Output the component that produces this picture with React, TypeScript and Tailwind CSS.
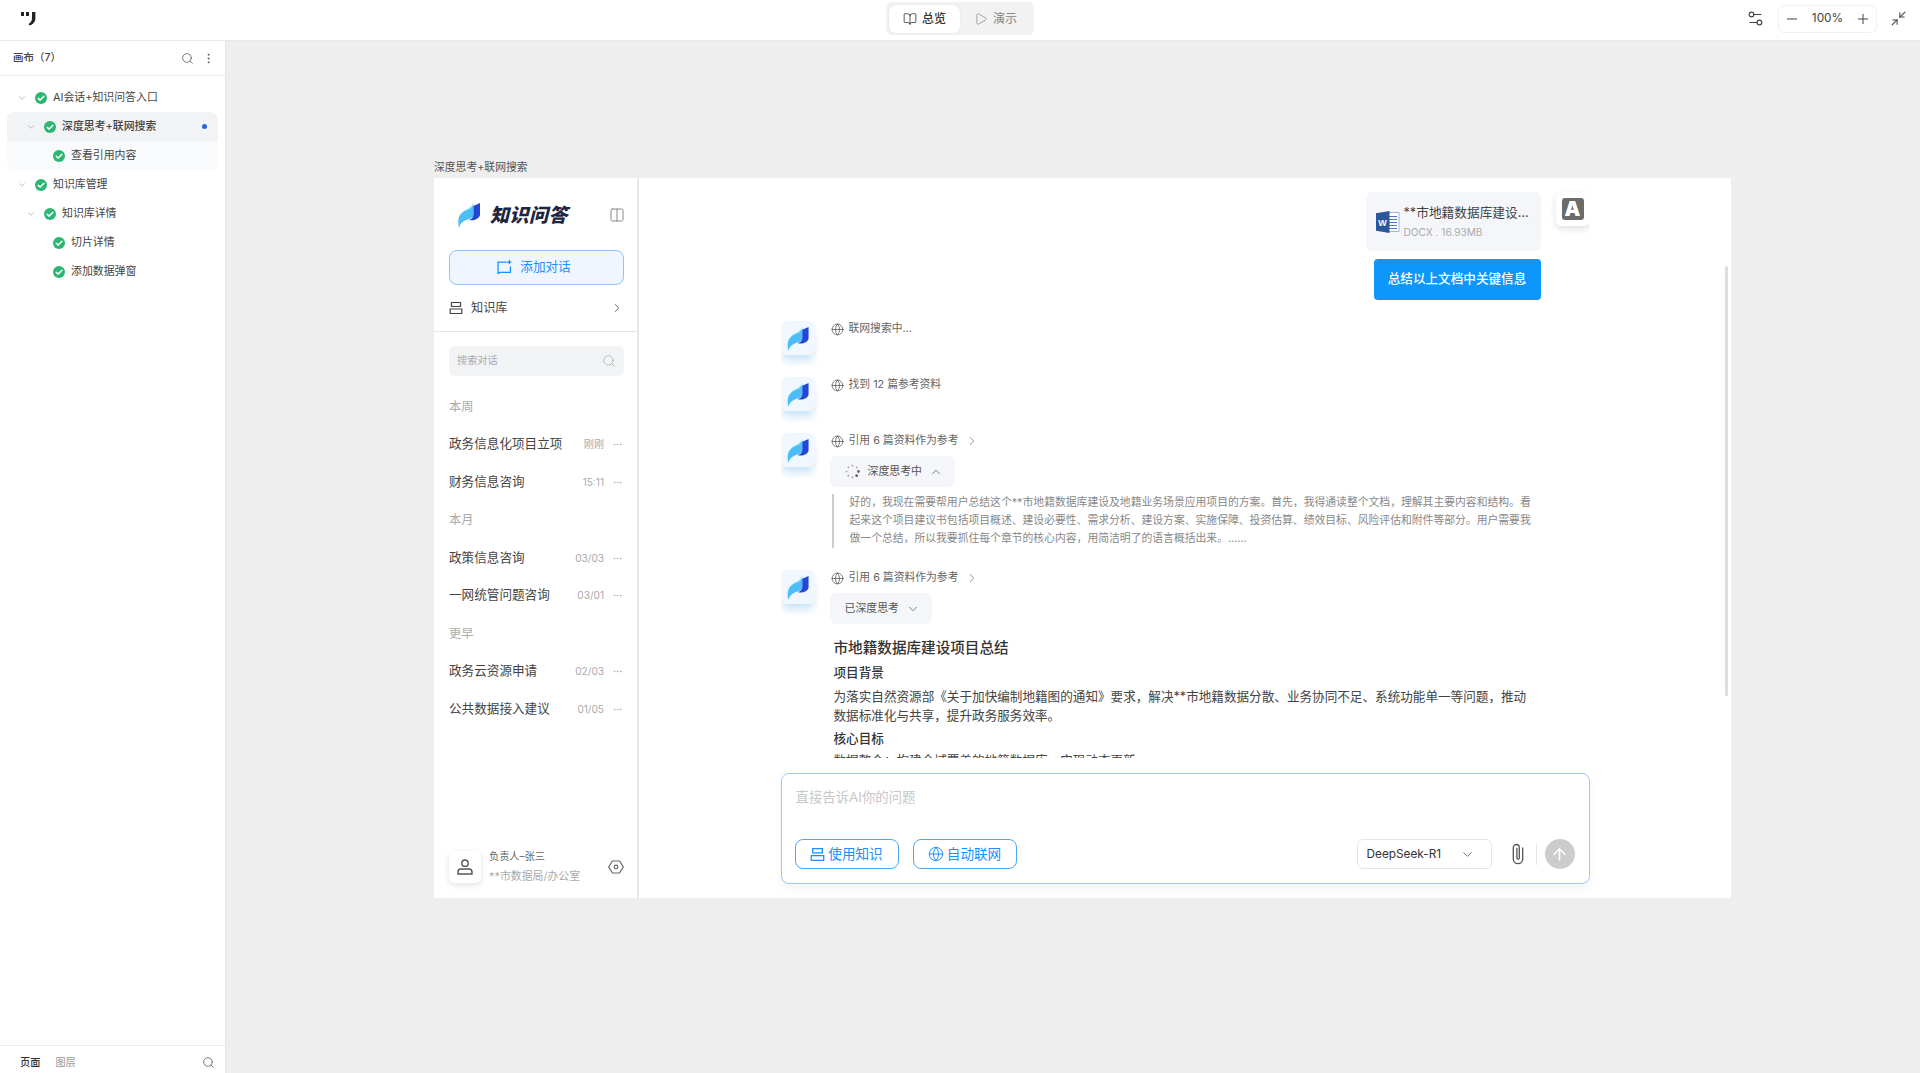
import { ArrowUp, BookOpen, ChevronDown, ChevronRight, ChevronUp, Columns2, Ellipsis, EllipsisVertical, Globe, Minimize2, Minus, Play, Plus, Search, Settings2 } from "lucide-react";

const tree = [
  { label: "AI会话+知识问答入口", level: 0 },
  { label: "深度思考+联网搜索", level: 1, active: true },
  { label: "查看引用内容", level: 2, soft: true },
  { label: "知识库管理", level: 0 },
  { label: "知识库详情", level: 1 },
  { label: "切片详情", level: 2 },
  { label: "添加数据弹窗", level: 2 },
];

const history = [
  { label: "本周" },
  { label: "政务信息化项目立项", time: "刚刚" },
  { label: "财务信息咨询", time: "15:11" },
  { label: "本月" },
  { label: "政策信息咨询", time: "03/03" },
  { label: "一网统管问题咨询", time: "03/01" },
  { label: "更早" },
  { label: "政务云资源申请", time: "02/03" },
  { label: "公共数据接入建议", time: "01/05" },
];

function CheckDot() {
  return (
    <svg viewBox="0 0 12 12" className="h-3 w-3 shrink-0">
      <circle cx="6" cy="6" r="6" fill="#2bb673" />
      <path d="M3.2 6.2 5.2 8.1 8.9 4.2" fill="none" stroke="#fff" strokeWidth="1.5" strokeLinecap="round" strokeLinejoin="round" />
    </svg>
  );
}

function Leaf({ className }: { className: string }) {
  return (
    <svg viewBox="0 0 22 26" className={className}>
      <path d="M5 9C9 7 14 5 16 0L16 8 6 13Z" fill="#a5e9ff" />
      <path d="M1 26C-1 18 1 12 6 9.5 10 7.5 13 7 15.5 3L15.5 12C15.5 17 10 17 7 18.5 4 20 2 22 1 26Z" fill="#4dbdf8" />
      <path d="M15.5 4 22 1 22 13C21 17 16 19 11 18 14 17 15.5 15 15.5 12Z" fill="#2347d4" />
    </svg>
  );
}

function KnowledgeIcon({ className }: { className: string }) {
  return (
    <svg viewBox="0 0 14 14" fill="none" stroke="currentColor" strokeWidth="1.2" className={className}>
      <path d="M2.5 1.5h9v4h-9z" />
      <path d="M12.8 8H1.2v4.5h11.6z" />
    </svg>
  );
}

function WebLine({ text, arrow }: { text: string; arrow?: boolean }) {
  return (
    <div className="ml-px flex h-[14px] translate-y-px items-center text-[10.8px] text-[#666]">
      <Globe className="mr-[5px] h-[13px] w-[13px] text-[#555]" strokeWidth={1.4} />
      <span>{text}</span>
      {arrow && <ChevronRight className="ml-[7px] h-[14px] w-[14px] text-[#777]" strokeWidth={1.3} />}
    </div>
  );
}

function BotAvatar() {
  return (
    <div className="flex h-[34px] w-[34px] shrink-0 items-center justify-center rounded-md bg-[#f1f7fe] shadow-[0_7px_8px_-2px_rgba(110,180,235,0.4)]">
      <Leaf className="h-[25px] w-[22px]" />
    </div>
  );
}

function Spinner() {
  const dots = [0, 45, 90, 135, 180, 225, 270, 315];
  return (
    <svg viewBox="0 0 16 16" className="h-[15px] w-[15px]">
      {dots.map((a, i) => (
        <circle
          key={a}
          cx={8 + 6.3 * Math.cos((a * Math.PI) / 180)}
          cy={8 + 6.3 * Math.sin((a * Math.PI) / 180)}
          r={i < 2 ? 1.5 : 0.9}
          fill={i < 2 ? "#666" : "#999"}
        />
      ))}
    </svg>
  );
}

function WordIcon() {
  return (
    <svg viewBox="0 0 24 24" className="h-6 w-6 shrink-0">
      <path d="M9 2.5h14v19H9z" fill="#fff" stroke="#8ea6cc" strokeWidth="0.8" />
      <path d="M13 6.5h8M13 9.5h8M13 12.5h8M13 15.5h8M13 18.5h8" stroke="#4f78b8" strokeWidth="1.1" />
      <path d="M0 3.2 13.5 1v22L0 20.8z" fill="#2b579a" />
      <text x="6.6" y="15.6" textAnchor="middle" fontSize="9" fontWeight="700" fill="#fff" fontFamily="Liberation Sans, sans-serif">W</text>
    </svg>
  );
}

export default function App() {
  return (
    <div className="flex h-screen flex-col overflow-hidden bg-white font-['Inter','Noto_Sans_CJK_SC',sans-serif] text-[#333]">
      {/* top bar */}
      <header className="flex h-[41px] shrink-0 items-center border-b border-[#e9e9e9] bg-white pb-[3px]">
        <div className="flex flex-1 items-center">
          <svg viewBox="0 0 16 15" className="ml-[20px] h-[15px] w-4 text-[#222]">
            <path d="M1 1h3v4H1zM6 1h3v4H6z" fill="currentColor" />
            <path d="M12 1h3.4v6C15.4 11 13 13.4 9.5 14.6L8.6 13C11 11.6 12 9.5 12 7z" fill="currentColor" />
          </svg>
        </div>
        <div className="flex h-[33px] w-[148px] items-center rounded-md bg-[#f2f2f2] p-[3px]">
          <div className="flex h-[28px] w-[71px] items-center justify-center gap-[5px] rounded-md bg-white text-[12px] font-medium text-[#333] shadow-[0_0_1px_rgba(0,0,0,0.2)]">
            <BookOpen className="h-[14px] w-[14px]" strokeWidth={1.4} />
            总览
          </div>
          <div className="flex h-[28px] flex-1 items-center justify-center gap-[5px] text-[12px] text-[#888]">
            <Play className="h-[14px] w-[14px]" strokeWidth={1.3} />
            演示
          </div>
        </div>
        <div className="flex flex-1 items-center justify-end">
          <Settings2 className="mr-[13px] h-[19px] w-[19px] text-[#444]" strokeWidth={1.4} />
          <div className="flex h-7 w-[99px] items-center justify-between rounded-md border border-[#f0f0f0] px-[5px] text-[11.8px] text-[#444]">
            <Minus className="h-4 w-4" strokeWidth={1.5} />
            <span>100%</span>
            <Plus className="h-4 w-4" strokeWidth={1.5} />
          </div>
          <Minimize2 className="ml-[13px] mr-[13px] h-[17px] w-[17px] text-[#444]" strokeWidth={1.5} />
        </div>
      </header>

      <div className="flex min-h-0 flex-1">
        {/* page tree */}
        <aside className="flex w-[226px] shrink-0 flex-col border-r border-[#e6e6e6] bg-white">
          <div className="flex h-[35px] shrink-0 items-center justify-between border-b border-[#ececec] pl-[13px] pr-[10px] text-[10.5px] text-[#444]">
            <span className="font-medium">画布（7）</span>
            <div className="flex items-center gap-[8px]">
              <Search className="h-[13px] w-[13px] text-[#555]" strokeWidth={1.4} />
              <EllipsisVertical className="h-[13px] w-[13px] text-[#555]" strokeWidth={1.6} />
            </div>
          </div>
          <div className="flex-1 pt-[7px]">
            {tree.map((t) => (
              <div
                key={t.label}
                className={[
                  "mx-[7px] flex h-[29px] items-center text-[10.9px] text-[#444]",
                  t.level === 0 ? "pl-[10px]" : "",
                  t.level === 1 ? "pl-[19px]" : "",
                  t.level === 2 ? "pl-[46px]" : "",
                  t.active ? "rounded-t-lg bg-[#f2f3f5] font-medium" : "",
                  t.soft ? "rounded-b-lg bg-[#f9fafb]" : "",
                ].join(" ")}
              >
                {t.level < 2 && <ChevronDown className="mr-[8px] h-[10px] w-[10px] text-[#999]" strokeWidth={1.5} />}
                <CheckDot />
                <span className="ml-[6px]">{t.label}</span>
                {t.active && <span className="ml-auto mr-[11px] h-[5px] w-[5px] rounded-full bg-[#2563eb]" />}
              </div>
            ))}
          </div>
          <div className="flex h-[28px] shrink-0 items-center border-t border-[#ececec] pl-[20px] pr-[10px] pt-[6px] text-[10.2px]">
            <span className="font-medium text-[#333]">页面</span>
            <span className="ml-[15px] text-[#999]">图层</span>
            <Search className="ml-auto h-[13px] w-[13px] text-[#555]" strokeWidth={1.4} />
          </div>
        </aside>

        {/* canvas */}
        <main className="flex-1 bg-[#eeeeee] pl-[208px] pt-[119px]">
          <div className="flex h-[18px] -translate-y-px items-center text-[10.8px] text-[#555]">深度思考+联网搜索</div>
          <div className="flex h-[720px] w-[1297px] bg-white">
            {/* chat list */}
            <section className="flex w-[205px] shrink-0 flex-col border-r-2 border-[#e8e8e8]">
              <div className="mt-[19px] flex h-[36px] items-center pl-[24px] pr-[12px]">
                <Leaf className="h-[26px] w-[22px]" />
                <span className="ml-[10px] text-[19px] font-black italic leading-none tracking-[0.5px] text-[#1d2540]">知识问答</span>
                <Columns2 className="ml-auto h-4 w-4 text-[#888]" strokeWidth={1.5} />
              </div>
              <div className="ml-[15px] mr-[13px] mt-[17px] flex h-[35px] items-center justify-center gap-[8px] rounded-lg border border-[#8fc3fb] bg-[#eff6ff] pr-[5px] text-[12.6px] text-[#1890ff]">
                <svg viewBox="0 0 14 14" fill="none" stroke="currentColor" strokeWidth="1.2" className="h-[15px] w-[15px]">
                  <path d="M9 2H1v10.5l2-1h9.5V6" />
                  <path d="M11.5 0v4M9.5 2h4" />
                </svg>
                添加对话
              </div>
              <div className="flex h-[47px] items-center border-b border-[#e5e5e5] pl-[15px] pr-[13px] text-[12.2px] text-[#444]">
                <KnowledgeIcon className="mr-[8px] h-[14px] w-[14px] text-[#444]" />
                知识库
                <ChevronRight className="ml-auto h-[14px] w-[14px] text-[#555]" strokeWidth={1.5} />
              </div>
              <div className="ml-[15px] mr-[13px] mt-[14px] flex h-[30px] items-center justify-between rounded-md bg-[#f2f3f5] px-[8px] text-[10.2px] text-[#aaa]">
                搜索对话
                <Search className="h-[14px] w-[14px] text-[#aaa]" strokeWidth={1.3} />
              </div>
              <div className="mt-[12px]">
                {history.map((h) =>
                  h.time ? (
                    <div key={h.label} className="flex h-[37.8px] items-center pl-[15px] pr-[14px] text-[12.6px] text-[#444]">
                      <span>{h.label}</span>
                      <span className="ml-auto text-[10.1px] text-[#aaa]">{h.time}</span>
                      <Ellipsis className="ml-[8px] h-[11px] w-[11px] text-[#aaa]" strokeWidth={1.5} />
                    </div>
                  ) : (
                    <div key={h.label} className="flex h-[37.8px] items-center px-[15px] text-[12.2px] text-[#aaa]">
                      {h.label}
                    </div>
                  ),
                )}
              </div>
              <div className="mt-auto flex items-center pb-[15px] pl-[15px] pr-[13px]">
                <div className="flex h-8 w-8 items-center justify-center rounded-md bg-white shadow-[0_2px_6px_rgba(0,0,0,0.12)]">
                  <svg viewBox="0 0 18 18" fill="none" stroke="#555" strokeWidth="1.4" className="h-[18px] w-[18px]">
                    <circle cx="9" cy="5.2" r="3.2" />
                    <path d="M2 16v-2c0-2 1.5-3 3-3h8c1.5 0 3 1 3 3v2z" />
                  </svg>
                </div>
                <div className="ml-[8px] flex flex-col gap-[5px] text-[10.2px] leading-[14px]">
                  <span className="-translate-y-px text-[#666]">负责人–张三</span>
                  <span className="text-[10.9px] text-[#aaa]">**市数据局/办公室</span>
                </div>
                <svg viewBox="0 0 16 16" fill="none" stroke="#666" strokeWidth="1.2" className="ml-auto h-4 w-4">
                  <path d="M4.5 2h7L15.3 8l-3.8 6h-7L.7 8z" />
                  <circle cx="8" cy="8" r="1.8" />
                </svg>
              </div>
            </section>

            {/* conversation */}
            <section className="relative flex-1">
              <div className="mx-auto h-[580px] w-[809px] overflow-hidden pt-[14px]">
                <div className="flex items-start justify-end gap-[15px]">
                  <div className="flex h-[59px] w-[175px] items-center gap-[4px] rounded-md bg-[#f5f6fa] pl-[10px]">
                    <WordIcon />
                    <div className="min-w-0">
                      <div className="text-[12.7px] leading-[18px] text-[#444]">**市地籍数据库建设…</div>
                      <div className="mt-[3px] text-[10.1px] leading-[14px] text-[#aaa]">DOCX . 16.93MB</div>
                    </div>
                  </div>
                  <div className="flex h-[34px] w-[34px] items-center justify-center rounded-md bg-white shadow-[0_3px_7px_rgba(0,0,0,0.12)]">
                    <div className="flex h-[22px] w-[22px] items-center justify-center rounded-[3px] bg-[#6b6b6b] text-[20px] font-black leading-none text-white">A</div>
                  </div>
                </div>
                <div className="mr-[49px] mt-[8px] flex justify-end">
                  <div className="flex h-[41px] w-[167px] items-center justify-center rounded-[4px] bg-[#0d96fb] text-[12.6px] font-medium text-white">总结以上文档中关键信息</div>
                </div>

                <div className="mt-[21px] flex h-[56px] gap-[15px]">
                  <BotAvatar />
                  <WebLine text="联网搜索中…" />
                </div>
                <div className="flex h-[56px] gap-[15px]">
                  <BotAvatar />
                  <WebLine text="找到 12 篇参考资料" />
                </div>

                <div className="flex h-[137px] gap-[15px]">
                  <BotAvatar />
                  <div>
                    <WebLine text="引用 6 篇资料作为参考" arrow />
                    <div className="mt-[9px] flex h-[31px] w-[125px] items-center rounded-md bg-[#f5f6fa] pl-[15px] text-[10.9px] text-[#555]">
                      <Spinner />
                      <span className="ml-[8px]">深度思考中</span>
                      <ChevronUp className="ml-[7px] h-[14px] w-[14px]" strokeWidth={1.3} />
                    </div>
                    <p className="ml-[2px] mt-[7px] w-[706px] border-l-2 border-[#ccc] pl-[16px] text-[10.82px] leading-[18px] text-[#888]">
                      好的，我现在需要帮用户总结这个**市地籍数据库建设及地籍业务场景应用项目的方案。首先，我得通读整个文档，理解其主要内容和结构。看起来这个项目建议书包括项目概述、建设必要性、需求分析、建设方案、实施保障、投资估算、绩效目标、风险评估和附件等部分。用户需要我做一个总结，所以我要抓住每个章节的核心内容，用简洁明了的语言概括出来。……
                    </p>
                  </div>
                </div>

                <div className="flex gap-[15px]">
                  <BotAvatar />
                  <div>
                    <WebLine text="引用 6 篇资料作为参考" arrow />
                    <div className="mt-[9px] flex h-[31px] w-[102px] items-center rounded-md bg-[#f5f6fa] pl-[15px] text-[10.9px] text-[#555]">
                      已深度思考
                      <ChevronDown className="ml-[7px] h-[14px] w-[14px]" strokeWidth={1.3} />
                    </div>
                    <div className="ml-[4px] mt-[13px] w-[700px] text-[#333]">
                      <h3 className="text-[14.6px] font-medium leading-[22px]">市地籍数据库建设项目总结</h3>
                      <h4 className="mt-[4px] text-[12.6px] font-medium leading-[20px]">项目背景</h4>
                      <p className="mt-[4px] text-[12.6px] leading-[19px] text-[#444]">
                        为落实自然资源部《关于加快编制地籍图的通知》要求，解决**市地籍数据分散、业务协同不足、系统功能单一等问题，推动数据标准化与共享，提升政务服务效率。
                      </p>
                      <h4 className="mt-[4px] text-[12.6px] font-medium leading-[20px]">核心目标</h4>
                      <p className="mt-[2px] text-[12.6px] leading-[19px] text-[#444]">数据整合：构建全域覆盖的地籍数据库，实现动态更新。</p>
                    </div>
                  </div>
                </div>
              </div>

              <div className="mx-auto mt-[15px] flex h-[111px] w-[809px] flex-col justify-between rounded-lg border border-[#9ecbfa] bg-white pb-[14px] pl-[13px] pr-[14px] pt-[14px] shadow-[0_4px_10px_rgba(0,0,0,0.05)]">
                <div className="pl-px text-[13.4px] leading-[18px] text-[#c8c8c8]">直接告诉AI你的问题</div>
                <div className="flex items-center text-[13.6px] text-[#1890ff]">
                  <div className="flex h-[30px] w-[104px] items-center justify-center gap-[3px] rounded-lg border border-[#4ea6f7]">
                    <KnowledgeIcon className="h-[15px] w-[15px]" />
                    使用知识
                  </div>
                  <div className="ml-[14px] flex h-[30px] w-[104px] items-center justify-center gap-[3px] rounded-lg border border-[#4ea6f7]">
                    <Globe className="h-4 w-4" strokeWidth={1.5} />
                    自动联网
                  </div>
                  <div className="ml-auto flex h-[30px] w-[135px] items-center justify-between rounded-md border border-[#e5e5e5] pl-[9px] pr-[16px] text-[11.8px] text-[#333]">
                    <span className="translate-y-px">DeepSeek-R1</span>
                    <ChevronDown className="h-[15px] w-[15px] text-[#555]" strokeWidth={1.3} />
                  </div>
                  <svg viewBox="0 0 12 22" fill="none" stroke="#555" strokeWidth="1.3" strokeLinecap="round" className="ml-[20px] h-[22px] w-3">
                    <path d="M10.7 5v11a4.7 4.7 0 0 1-9.4 0V4.5a3 3 0 0 1 6 0V15a1.2 1.2 0 0 1-2.4 0V5.5" />
                  </svg>
                  <div className="ml-[12px] h-[22px] w-px bg-[#e5e5e5]" />
                  <div className="ml-[8px] flex h-[30px] w-[30px] items-center justify-center rounded-full bg-[#cccccc]">
                    <ArrowUp className="h-[19px] w-[19px] text-white" strokeWidth={2} />
                  </div>
                </div>
              </div>

              {/* scrollbar thumb */}
              <div className="absolute right-[3px] top-[88px] h-[430px] w-[3px] rounded-full bg-[#dddddd]" />
            </section>
          </div>
        </main>
      </div>
    </div>
  );
}
